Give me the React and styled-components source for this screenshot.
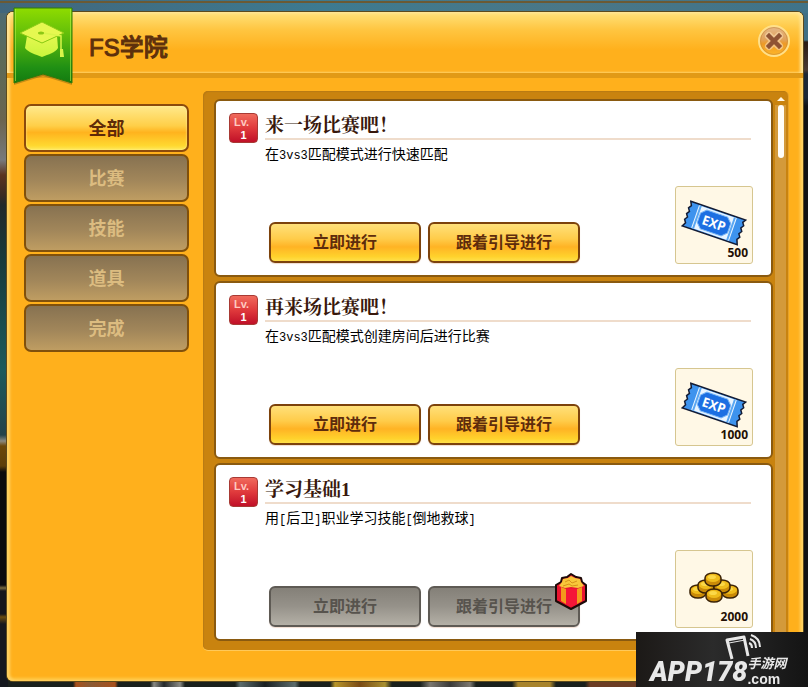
import React, { useState } from "react";
import styled, { createGlobalStyle, css } from "styled-components";

const tabs = ["全部", "比赛", "技能", "道具", "完成"];

const quests = [
    { id: 1, level: 1, title: "来一场比赛吧！", text: "在3vs3匹配模式进行快速匹配", reward: "exp", amount: 500 },
    { id: 2, level: 1, title: "再来场比赛吧！", text: "在3vs3匹配模式创建房间后进行比赛", reward: "exp", amount: 1000 },
    { id: 3, level: 1, title: "学习基础1", text: "用[后卫]职业学习技能[倒地救球]", reward: "coins", amount: 2000, locked: true, gift: true },
];

function CapIcon() {
    return (
        <svg width="60" height="80" viewBox="0 0 60 80" aria-hidden="true">
            <defs>
                <linearGradient id="ribbon" x1="0" y1="0" x2="0" y2="1">
                    <stop offset="0" stopColor="#8fdc00" />
                    <stop offset="0.35" stopColor="#62be0a" />
                    <stop offset="0.8" stopColor="#1f8f14" />
                    <stop offset="1" stopColor="#137a10" />
                </linearGradient>
                <linearGradient id="cap" x1="0" y1="0" x2="0" y2="1">
                    <stop offset="0" stopColor="#e4f850" />
                    <stop offset="1" stopColor="#c8f53c" />
                </linearGradient>
            </defs>
            <path d="M1 78V2h58v76L30 69z" fill="#5a4a08" opacity="0.35" />
            <path d="M1 1h58v75L30 67 1 76z" fill="url(#ribbon)" stroke="#2f7a08" />
            <path d="M2.500 2v72M57.500 2v72" stroke="#b6ee4a" opacity="0.6" />
            <path d="M14 29l-2 12c4 5 10 6 17 9 7-3 13-4 16-9l-1-12-15 7z" fill="url(#cap)" />
            <path d="M7 26L29 15l22 11-22 10z" fill="#e6f850" stroke="#8ccc14" />
            <path d="M30 26l18 3v14" fill="none" stroke="#d9f54a" strokeWidth="1.500" />
            <ellipse cx="28" cy="26" rx="3" ry="1.500" fill="#8cc814" />
            <path d="M47 42h3l1 8h-4z" fill="#d9f54a" />
        </svg>
    );
}

function CloseIcon() {
    return (
        <svg width="34" height="34" viewBox="0 0 34 34" aria-hidden="true">
            <defs>
                <linearGradient id="close" x1="0" y1="0" x2="0" y2="1">
                    <stop offset="0" stopColor="#e4b98c" />
                    <stop offset="0.45" stopColor="#e2a25a" />
                    <stop offset="0.6" stopColor="#ee9a24" />
                    <stop offset="1" stopColor="#ffb82a" />
                </linearGradient>
            </defs>
            <circle cx="17" cy="17" r="15" fill="url(#close)" stroke="#ffe08a" strokeWidth="2" />
            <circle cx="17" cy="17" r="13.500" fill="none" stroke="#c98a3a" opacity="0.6" />
            <path d="M12 12l10 10M22 12L12 22" stroke="#f6d3a4" strokeWidth="8" strokeLinecap="round" opacity="0.7" />
            <path d="M12 12l10 10M22 12L12 22" stroke="#8f5334" strokeWidth="4.500" strokeLinecap="square" />
        </svg>
    );
}

function TicketIcon() {
    return (
        <svg width="66" height="50" viewBox="0 0 66 50" role="img" aria-label="EXP">
            <g transform="rotate(19 33 25)">
                <path d="M4 12h58l-2 3 2 3-2 3 2 3-2 3 2 3-2 3 2 5H4l2-4-2-3 2-3-2-3 2-3-2-3 2-3z" fill="#3d93ee" stroke="#141c34" strokeWidth="1.500" />
                <path d="M13 13h40v24H13z" fill="#eaf5ff" />
                <path d="M15 13v24M51 13v24" stroke="#58a6f2" strokeWidth="2" />
                <path d="M22 15h22l5 5v10l-5 5H22l-5-5V20z" fill="#1c6fe2" stroke="#7db8f5" />
                <text x="33" y="30" textAnchor="middle" fontFamily="Open Sans" fontWeight="700" fontSize="13" fill="#fff">EXP</text>
            </g>
        </svg>
    );
}

const coins = [
    [9, 20],
    [41, 20],
    [17, 15],
    [33, 15],
    [25, 24],
    [24, 8],
];

function CoinsIcon() {
    return (
        <svg width="50" height="32" viewBox="0 0 50 32" role="img" aria-label="coins">
            {coins.map(([x, y]) => (
                <g key={`${x}-${y}`}>
                    <path d={`M${x - 8} ${y - 1}a8 5 0 0 1 16 0v3a8 5 0 0 1-16 0z`} fill="#c98a08" stroke="#3a2206" strokeWidth="1.500" />
                    <ellipse cx={x} cy={y - 1} rx="7" ry="4" fill="#efbc1c" />
                    <ellipse cx={x - 1} cy={y - 2} rx="4" ry="2" fill="#fbd848" />
                </g>
            ))}
        </svg>
    );
}

function GiftIcon() {
    return (
        <svg width="34" height="38" viewBox="0 0 34 38" aria-hidden="true">
            <path d="M2 13l5-3 1-4 5-1 4-3 5 3 5 1 1 4 4 3v16l-15 8L2 29z" fill="#ea1430" stroke="#1c0a08" strokeWidth="2" strokeLinejoin="round" />
            <path d="M12 17h11v15l-6 3-5-3z" fill="#f51638" />
            <path d="M7 15l5 2v15l-5-3zM28 15l-5 2v15l5-3z" fill="#f39a1c" />
            <path d="M5 14l3-4 1-3 5-1 3-2 4 2 5 1 1 3 3 4-6 2-7-1-6 1z" fill="#f8c83a" />
            <path d="M11 10l4-2 3 3 5-2M9 14l6-2 3 2 6-1" fill="none" stroke="#d8921a" />
        </svg>
    );
}

function PhoneIcon() {
    return (
        <svg width="38" height="26" viewBox="0 0 38 26" fill="none" stroke="#e8e8e8" aria-hidden="true">
            <path d="M8 25L3 6l17-3 4 19" strokeWidth="3" strokeLinejoin="round" />
            <path d="M5 9l16-3M10 5l4-1" strokeWidth="1" />
            <path d="M25 9q3 1 3 5M26 5q6 2 6 9M27 1q9 3 9 12" strokeWidth="2" />
        </svg>
    );
}

// half-width runs are set smaller so that two of them fill one full-width cell
function MixedText({ children }) {
    return children.split(/([\x20-\x7e]+)/).map((part, i) => (i % 2 ? <HalfWidth key={i}>{part}</HalfWidth> : part));
}

function Quest({ quest }) {
    return (
        <Card>
            <Level>
                <span>Lv.</span>
                <b>{quest.level}</b>
            </Level>
            <CardMain>
                <CardTitle>{quest.title}</CardTitle>
                <CardText>
                    <MixedText>{quest.text}</MixedText>
                </CardText>
                <CardFoot>
                    <Actions>
                        <ActionButton disabled={quest.locked}>立即进行</ActionButton>
                        <GuideSlot>
                            <ActionButton disabled={quest.locked}>跟着引导进行</ActionButton>
                            {quest.gift && (
                                <GiftBadge>
                                    <GiftIcon />
                                </GiftBadge>
                            )}
                        </GuideSlot>
                    </Actions>
                    <Reward>
                        <RewardArt>{quest.reward === "exp" ? <TicketIcon /> : <CoinsIcon />}</RewardArt>
                        <Amount>{quest.amount}</Amount>
                    </Reward>
                </CardFoot>
            </CardMain>
        </Card>
    );
}

function App() {
    const [active, setActive] = useState("全部");

    return (
        <Page>
            <GlobalStyle />
            <Panel>
                <Header>
                    <Ribbon>
                        <CapIcon />
                    </Ribbon>
                    <Title>FS学院</Title>
                    <CloseButton aria-label="关闭">
                        <CloseIcon />
                    </CloseButton>
                </Header>
                <Content>
                    <Sidebar>
                        {tabs.map(tab => (
                            <TabButton key={tab} $active={tab === active} onClick={() => setActive(tab)}>
                                {tab}
                            </TabButton>
                        ))}
                    </Sidebar>
                    <ListFrame>
                        <List>
                            {quests.map(quest => (
                                <Quest key={quest.id} quest={quest} />
                            ))}
                        </List>
                        <ScrollBar>
                            <ScrollArrow />
                            <ScrollTrack>
                                <ScrollThumb />
                            </ScrollTrack>
                        </ScrollBar>
                    </ListFrame>
                </Content>
            </Panel>
            <Watermark>
                <PhoneSpot>
                    <PhoneIcon />
                </PhoneSpot>
                <Brand>APP178</Brand>
                <BrandSide>
                    <BrandName>手游网</BrandName>
                    <BrandCom>.com</BrandCom>
                </BrandSide>
            </Watermark>
        </Page>
    );
}

const GlobalStyle = createGlobalStyle`
    * {
        box-sizing: border-box;
    }

    body {
        margin: 0;
        background: #14181a;
        font-family: "Liberation Sans", "Noto Sans CJK SC", sans-serif;
    }

    button {
        font-family: inherit;
        cursor: pointer;
    }
`;

const Page = styled.div`
    min-height: 100vh;
    padding: 12px 5px 6px 7px;
    overflow: hidden;
    background:
        linear-gradient(#6b5a34, #6b5a34) 0 1px / 100% 2px no-repeat,
        linear-gradient(90deg, #41667c, #3d7a90 40%, #4a7787 70%, #3f7389) 0 0 / 100% 13px no-repeat,
        linear-gradient(90deg, transparent 73px, #a8501c 76px, #8a5a34 90px, #a8501c 115px, transparent 118px, transparent 150px, #8a8a84 154px, #24282a 164px, #8a8a84 180px, transparent 185px, transparent 235px, #5c6c6c 240px, #1a2022 265px, #5c6c6c 295px, transparent 300px, transparent 330px, #b8962a 335px, #7a4a14 360px, #a89030 385px, transparent 392px, transparent 420px, #7c7870 430px, #3a3a38 450px, #7c7870 470px, transparent 476px, transparent 512px, #a8842c 518px, #a8842c 550px, transparent 556px, transparent 585px, #6c3c24 590px, #6c3c24 636px, transparent 640px) 0 100% / 100% 6px no-repeat,
        linear-gradient(#4a6a78 0, #5c6a58 60px, #6a6450 120px, #77797c 160px, #5a3420 175px, #3a2a22 195px, #22292a 205px, #173a3c 260px, #1c5a5c 370px, #24434a 435px, #8a8a80 441px, #6b480a 446px, #5c3f0a 466px, #0a0a0c 472px, #0a0a0e 585px, #7a6a40 588px, #14161c 591px, #14161c 614px, #6b4d10 617px, #15181e 624px, #15181e 100%) 0 0 / 8px 100% no-repeat,
        linear-gradient(#3f6f85 0, #3f6f85 40px, #2a1c14 42px, #4a3a34 70px, #1c2836 74px, #1c2836 98px, #101214 106px, #101214 100%) 100% 0 / 6px 100% no-repeat,
        #1a201c;
`;

const Panel = styled.main`
    min-height: calc(100vh - 18px);
    display: flex;
    flex-direction: column;
    border-radius: 6px;
    background: #ffb01c;
    box-shadow: inset 3px 0 3px #ffd263, inset -3px 0 3px #ffd263, inset 0 -3px 3px #ffc84a, 0 0 0 1px #5c4a1c;
`;

const Header = styled.header`
    display: flex;
    align-items: center;
    height: 66px;
    padding: 0 12px 4px 6px;
    border-bottom: 5px solid #e29a16;
    border-radius: 6px 6px 0 0;
    background: linear-gradient(#ffe27a, #ffc540 18px, #ffb01c 38px);
    box-shadow: inset 3px 1px 3px #ffe59a, inset -3px 0 3px #ffe59a;
`;

const Ribbon = styled.div`
    align-self: flex-start;
    width: 60px;
    height: 60px;
    margin-top: -5px;
`;

const Title = styled.h1`
    flex: 1;
    margin: 0 0 0 16px;
    padding-top: 14px;
    font-size: 24px;
    font-weight: 500;
    line-height: 32px;
    color: #5e300c;
    -webkit-text-stroke: 1px #5e300c;
`;

const CloseButton = styled.button`
    width: 34px;
    height: 34px;
    padding: 0;
    border: 0;
    background: none;
`;

const Content = styled.div`
    flex: 1;
    display: flex;
    gap: 14px;
    padding: 13px 15px 31px 17px;
`;

const Sidebar = styled.nav`
    width: 165px;
    display: flex;
    flex-direction: column;
    gap: 2px;
    padding-top: 13px;
`;

const TabButton = styled.button`
    height: 48px;
    padding: 0 0 3px;
    border: 2px solid #80500c;
    border-radius: 7px;
    background: linear-gradient(#877251, #a1865a 55%, #bf9d62);
    font-size: 18px;
    font-weight: 700;
    color: #dcbc80;

    ${props => props.$active && css`
        border-color: #8c4a0c;
        background: linear-gradient(#ffe98c, #ffcf48 45%, #ffb31e 60%, #ffd830 90%, #ffe95a);
        box-shadow: inset 0 0 2px #fff2a8;
        color: #5e2a08;
    `}
`;

const ListFrame = styled.section`
    flex: 1;
    display: flex;
    align-self: flex-start;
    padding: 8px 0 9px 11px;
    border-radius: 5px;
    background: #c9830f;
    box-shadow: 0 1px 0 #ffc95a, 1px 0 0 #e6a22a, inset 1px 1px 1px #b87a14;
`;

const List = styled.div`
    flex: 1;
    display: flex;
    flex-direction: column;
    gap: 4px;
`;

const Card = styled.article`
    display: flex;
    gap: 7px;
    padding: 12px 18px 11px 13px;
    border: 2px solid #8a5a10;
    border-radius: 6px;
    background: #fff;
`;

const Level = styled.div`
    width: 29px;
    height: 30px;
    display: flex;
    flex-direction: column;
    align-items: center;
    padding-top: 2px;
    border: 1px solid #a83a34;
    border-radius: 4px;
    background: linear-gradient(#f06a5c, #e03a3c 50%, #c01028);
    font-size: 11px;
    line-height: 13px;
    color: #fff;

    span {
        align-self: flex-start;
        padding-left: 4px;
        font-weight: 700;
        color: #ffc9c0;
    }
`;

const CardMain = styled.div`
    flex: 1;
`;

const CardTitle = styled.h2`
    height: 27px;
    margin: 0 2px 0 0;
    border-bottom: 2px solid #efdccb;
    font-family: "Liberation Serif", "Noto Serif CJK SC", "Noto Sans CJK SC", serif;
    font-size: 19px;
    font-weight: 700;
    line-height: 26px;
    color: #38180c;
`;

const CardText = styled.p`
    margin: 0;
    font-family: "Noto Sans CJK SC", sans-serif;
    font-size: 14px;
    line-height: 26px;
    color: #000;
`;

const HalfWidth = styled.span`
    font-family: "Liberation Mono", monospace;
    font-size: 12px;
`;

const CardFoot = styled.div`
    display: flex;
    align-items: flex-end;
    justify-content: space-between;
    margin-top: 17px;
`;

const Actions = styled.div`
    display: flex;
    gap: 7px;
    padding: 0 0 1px 4px;
`;

const GuideSlot = styled.div`
    position: relative;
`;

const ActionButton = styled.button`
    display: block;
    width: 152px;
    height: 41px;
    padding: 0 0 4px;
    border: 2px solid #7c420c;
    border-radius: 6px;
    background: linear-gradient(#ffe07a, #ffcc4a 40%, #ffb324 62%, #ffd22c 88%, #ffe04a);
    box-shadow: 0 1px 1px #f0dcd0;
    font-size: 16px;
    font-weight: 700;
    color: #5e2c0c;

    &:disabled {
        border-color: #5e5a54;
        background: linear-gradient(#848078, #96928a 50%, #b4b0a6);
        color: #57534d;
        cursor: default;
    }
`;

const GiftBadge = styled.span`
    position: absolute;
    top: -14px;
    right: -8px;
    display: flex;
`;

const Reward = styled.div`
    width: 78px;
    height: 78px;
    display: flex;
    flex-direction: column;
    align-items: center;
    padding: 13px 4px 4px;
    border: 1px solid #d6c690;
    border-radius: 3px;
    background: #fff8e6;
`;

const RewardArt = styled.div`
    height: 46px;
    display: flex;
    align-items: center;
`;

const Amount = styled.span`
    align-self: flex-end;
    font-family: "Open Sans", sans-serif;
    font-size: 12px;
    font-weight: 700;
    line-height: 13px;
    color: #241004;
`;

const ScrollBar = styled.div`
    width: 15px;
    display: flex;
    flex-direction: column;
    align-items: center;
    margin: -3px 0 -8px;
`;

const ScrollArrow = styled.div`
    width: 0;
    height: 0;
    border: 4px solid transparent;
    border-top: 0;
    border-bottom-color: #fff8e8;
    margin: 1px 0 4px;
`;

const ScrollTrack = styled.div`
    flex: 1;
    width: 11px;
    display: flex;
    justify-content: center;
    background: #d49a3a;
`;

const ScrollThumb = styled.div`
    width: 6px;
    height: 53px;
    border-radius: 3px;
    background: #fffdf8;
`;

const Watermark = styled.aside`
    position: fixed;
    right: 0;
    bottom: 0;
    width: 172px;
    height: 55px;
    display: flex;
    align-items: flex-end;
    padding: 0 0 1px 14px;
    background: linear-gradient(90deg, #1c1917, #2b2b2b 45%, #141414);
    color: #e8e8e8;
    font-style: italic;
    font-weight: 700;
`;

const PhoneSpot = styled.div`
    position: absolute;
    top: 2px;
    left: 88px;
`;

const Brand = styled.strong`
    font-family: Roboto, sans-serif;
    font-size: 27px;
    font-weight: 900;
    line-height: 28px;
`;

const BrandSide = styled.div`
    display: flex;
    flex-direction: column;
    white-space: nowrap;
`;

const BrandName = styled.span`
    font-family: "Noto Sans CJK SC", sans-serif;
    font-size: 13px;
    line-height: 18px;
`;

const BrandCom = styled.span`
    font-size: 14px;
    font-style: normal;
    line-height: 14px;
`;

export default App;
